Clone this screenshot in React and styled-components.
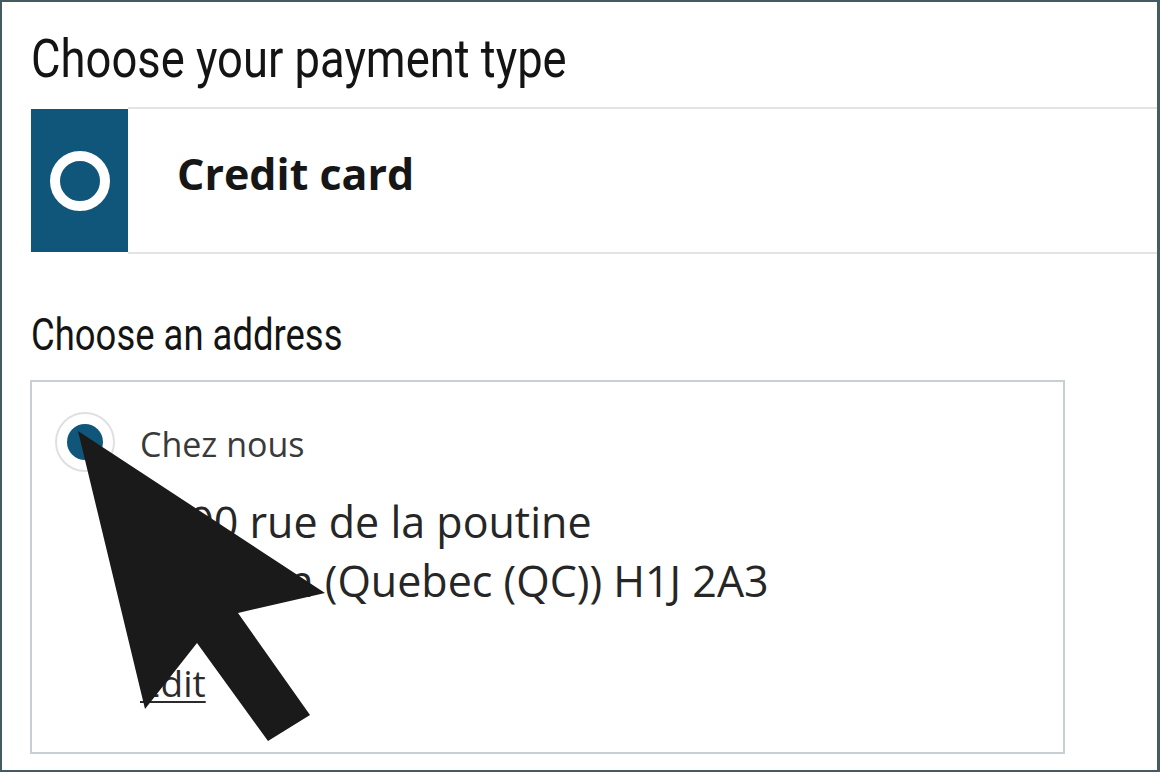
import React from "react";
import styled, { createGlobalStyle } from "styled-components";

const GlobalStyle = createGlobalStyle`
  html, body {
    margin: 0;
    padding: 0;
    background: #465a61;
  }
`;

const Frame = styled.div`
  position: relative;
  box-sizing: border-box;
  width: 1160px;
  height: 772px;
  border: 2px solid #465a61;
  border-right-width: 3px;
  background: #fff;
  overflow: hidden;
  padding-left: 29px;
`;

const Title = styled.h1`
  margin: 30px 0 0;
  font-family: Roboto, "Liberation Sans", sans-serif;
  font-weight: 400;
  font-size: 54px;
  line-height: 1;
  color: #141414;
  white-space: nowrap;
  transform: scaleX(0.84);
  transform-origin: left center;
`;

const Subtitle = styled(Title).attrs({ as: "h2" })`
  margin: 58px 0 23px;
  font-size: 45px;
  transform: scaleX(0.81);
`;

const PaymentOption = styled.div`
  display: flex;
  align-items: center;
  margin-top: 21px;
`;

const OptionMarker = styled.div`
  display: flex;
  align-items: center;
  justify-content: center;
  width: 97px;
  height: 143px;
  background: #10567b;
  flex-shrink: 0;
`;

const Ring = styled.span`
  box-sizing: border-box;
  width: 60px;
  height: 60px;
  border-radius: 50%;
  border: 10px solid #fff;
`;

const OptionLabel = styled.div`
  flex: 1;
  box-sizing: border-box;
  height: 147px;
  display: flex;
  align-items: center;
  padding: 0 0 14px 49px;
  border-top: 2px solid #e3e3e3;
  border-bottom: 2px solid #e3e3e3;
  font-family: "Open Sans", "Noto Sans", sans-serif;
  font-weight: 700;
  font-size: 43px;
  color: #161616;
`;

const AddressCard = styled.div`
  box-sizing: border-box;
  width: 1035px;
  margin-left: -1px;
  border: 2px solid #c9ced4;
  padding: 30px 0 43px 23px;
  display: grid;
  grid-template-columns: 60px 1fr;
  column-gap: 25px;
  font-family: "Open Sans", "Noto Sans", sans-serif;
`;

const Radio = styled.span`
  box-sizing: border-box;
  width: 60px;
  height: 60px;
  border-radius: 50%;
  border: 2px solid #e0e0e0;
  display: flex;
  align-items: center;
  justify-content: center;

  &::after {
    content: "";
    width: 36px;
    height: 36px;
    border-radius: 50%;
    background: ${(p) => (p.$checked ? "#10567b" : "transparent")};
  }
`;

const AddressName = styled.div`
  align-self: center;
  padding-top: 4px;
  font-size: 34px;
  color: #3a3a3a;
`;

const AddressLines = styled.div`
  grid-column: 2;
  margin-top: 20px;
  font-size: 43px;
  line-height: 59px;
  color: #262626;
`;

const EditLink = styled.a`
  grid-column: 2;
  justify-self: start;
  margin-top: 47px;
  font-size: 37px;
  line-height: 1.4;
  color: #2b2b2b;
  text-decoration: underline;
  text-decoration-thickness: 2px;
  text-underline-offset: 4px;
`;

const Pointer = styled.svg`
  position: absolute;
  left: 68px;
  top: 423px;
  width: 260px;
  height: 320px;
  pointer-events: none;
`;

export default function App() {
  return (
    <>
      <GlobalStyle />
      <Frame>
        <Title>Choose your payment type</Title>
        <PaymentOption>
          <OptionMarker>
            <Ring />
          </OptionMarker>
          <OptionLabel>Credit card</OptionLabel>
        </PaymentOption>
        <Subtitle>Choose an address</Subtitle>
        <AddressCard>
          <Radio $checked />
          <AddressName>Chez nous</AddressName>
          <AddressLines>
            1000 rue de la poutine
            <br />
            Saint-Lin (Quebec (QC)) H1J 2A3
          </AddressLines>
          <EditLink href="#">Edit</EditLink>
        </AddressCard>
        <Pointer viewBox="70 425 260 320">
          <polygon
            points="78,431 145,709 197,643 268,741 310,715 238,613 325,593"
            fill="#1a1a1a"
          />
        </Pointer>
      </Frame>
    </>
  );
}
